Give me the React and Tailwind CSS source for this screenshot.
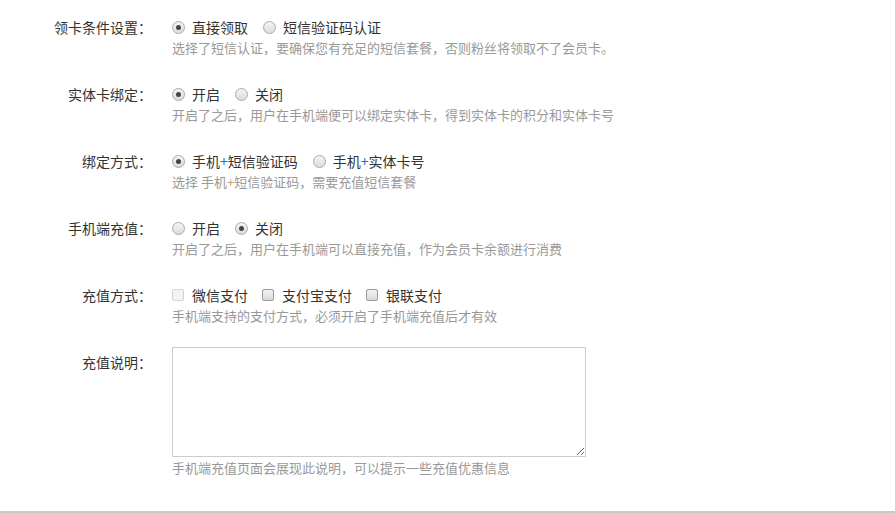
const FONT = "font-['SimSun','Noto_Sans_CJK_SC',sans-serif]";

function Radio({ checked, label }) {
  return (
    <label className="flex items-center mr-[15px]">
      <span className="w-[13px] h-[13px] rounded-full border border-[#a9a9a9] bg-gradient-to-b from-[#f4f4f4] to-[#dcdcdc] flex items-center justify-center">
        {checked && <span className="w-[5px] h-[5px] rounded-full bg-[#444]" />}
      </span>
      <span className="ml-[7px] text-[14px] text-[#333]">{label}</span>
    </label>
  );
}

function Check({ disabled, label }) {
  return (
    <label className="flex items-center mr-[14px]">
      <span
        className={
          disabled
            ? 'w-[12px] h-[12px] rounded-[2px] border border-[#d4d4d4] bg-[#f3f3f3]'
            : 'w-[12px] h-[12px] rounded-[2px] border border-[#9a9a9a] bg-gradient-to-b from-[#f4f4f4] to-[#dadada]'
        }
      />
      <span className="ml-[8px] text-[14px] text-[#333]">{label}</span>
    </label>
  );
}

function Row({ label, hint, children, className = '' }) {
  return (
    <div className={'flex ' + className}>
      <div className="w-[152px] text-right text-[14px] leading-[20px] text-[#333]">{label}</div>
      <div className="ml-[20px]">
        <div className="flex items-center h-[20px]">{children}</div>
        <div className="mt-[2px] text-[13px] leading-[18px] text-[#999]">{hint}</div>
      </div>
    </div>
  );
}

export default function App() {
  return (
    <div className={'w-[895px] h-[513px] bg-white border-b-2 border-[#c8c8c8] pt-[17px] ' + FONT}>
      <Row label="领卡条件设置：" hint="选择了短信认证，要确保您有充足的短信套餐，否则粉丝将领取不了会员卡。" className="mb-[27px]">
        <Radio checked label="直接领取" />
        <Radio label="短信验证码认证" />
      </Row>
      <Row label="实体卡绑定：" hint="开启了之后，用户在手机端便可以绑定实体卡，得到实体卡的积分和实体卡号" className="mb-[27px]">
        <Radio checked label="开启" />
        <Radio label="关闭" />
      </Row>
      <Row
        label="绑定方式："
        hint={<>选择 手机<span className="text-[#c8a27a]">+</span>短信验证码，需要充值短信套餐</>}
        className="mb-[27px]"
      >
        <Radio checked label={<>手机<span className="text-[#2a6fb5]">+</span>短信验证码</>} />
        <Radio label={<>手机<span className="text-[#2a6fb5]">+</span>实体卡号</>} />
      </Row>
      <Row label="手机端充值：" hint="开启了之后，用户在手机端可以直接充值，作为会员卡余额进行消费" className="mb-[27px]">
        <Radio label="开启" />
        <Radio checked label="关闭" />
      </Row>
      <Row label="充值方式：" hint="手机端支持的支付方式，必须开启了手机端充值后才有效" className="mb-[22px]">
        <Check disabled label="微信支付" />
        <Check label="支付宝支付" />
        <Check label="银联支付" />
      </Row>
      <div className="flex">
        <div className="w-[152px] pt-[5px] text-right text-[14px] leading-[20px] text-[#333]">充值说明：</div>
        <div className="ml-[20px]">
          <textarea className="block w-[414px] h-[110px] border border-[#ccc] outline-none" />
          <div className="mt-[2px] text-[13px] leading-[18px] text-[#999]">手机端充值页面会展现此说明，可以提示一些充值优惠信息</div>
        </div>
      </div>
    </div>
  );
}
